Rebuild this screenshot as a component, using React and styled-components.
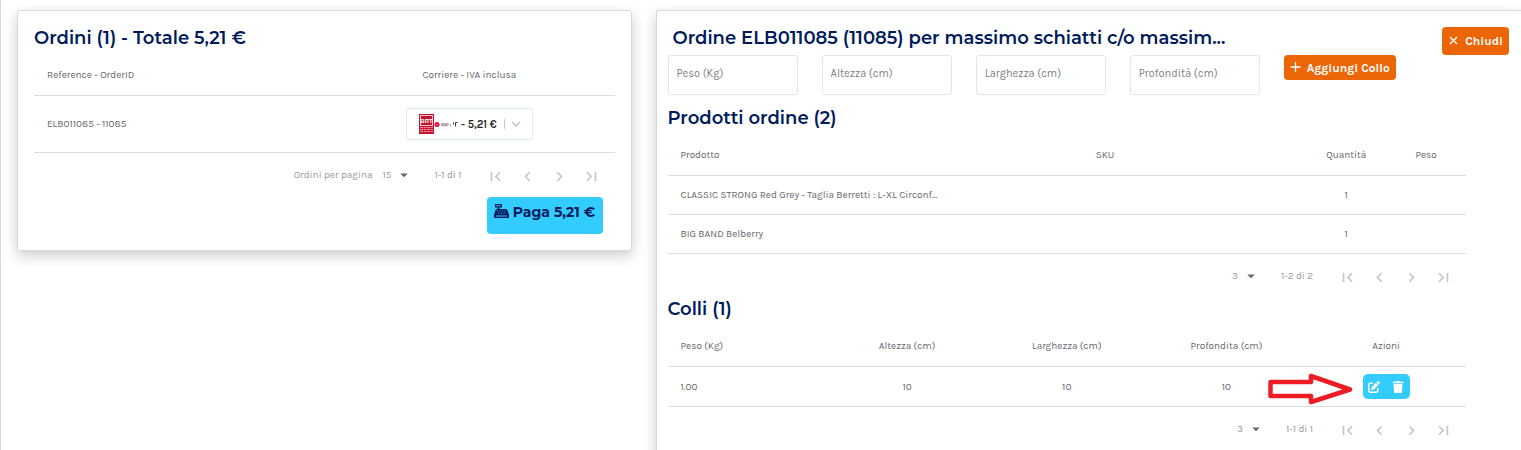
import React from "react";
import styled, { createGlobalStyle } from "styled-components";
import { FaTrash } from "react-icons/fa";
import { FaPenToSquare } from "react-icons/fa6";
import { MdFirstPage, MdLastPage, MdChevronLeft, MdChevronRight, MdArrowDropDown } from "react-icons/md";

const GlobalStyle = createGlobalStyle`
  * { box-sizing: border-box; }
  body {
    margin: 0;
    background: #fff;
    color: #67686c;
    font-family: Karla, Inter, sans-serif;
    font-size: 10px;
    overflow: hidden;
  }
  button, input, select { font-family: inherit; }
`;

const Page = styled.main`
  display: grid;
  grid-template-columns: minmax(0, 71fr) minmax(0, 100fr);
  gap: 24px;
  align-items: start;
  min-height: 100vh;
  padding: 10px 0 0 16px;
  border-left: 1px solid #d9d9d9;
`;

const Card = styled.section`
  background: #fff;
  border: 1px solid #d8d8d8;
  border-radius: 3px;
  box-shadow: 0 5px 14px rgba(0, 0, 0, 0.2);
`;

const OrdersCard = styled(Card)`
  padding: 16px;
`;

const DetailCard = styled(Card)`
  border-right: 0;
  border-radius: 3px 0 0 0;
  padding: 16px 12px 16px 11px;
  min-height: 460px;
`;

const Title = styled.h2`
  margin: 0;
  padding-left: ${(p) => (p.$indent ? 5 : 0)}px;
  color: #001b5c;
  font-family: Montserrat, Inter, sans-serif;
  font-size: 18px;
  font-weight: 600;
  line-height: 22px;
  white-space: nowrap;
  overflow: hidden;
  text-overflow: ellipsis;
`;

const DetailHeader = styled.header`
  display: flex;
  justify-content: space-between;
  align-items: flex-start;
`;

const DetailBody = styled.div`
  padding-right: 43px;
`;

const OrangeButton = styled.button`
  display: inline-flex;
  align-items: center;
  justify-content: center;
  gap: 6px;
  height: ${(p) => (p.$tall ? 28 : 25)}px;
  padding: 0 6px;
  border: 0;
  border-radius: 4px;
  background: #ec6608;
  color: #fff;
  font-size: 12px;
  font-weight: 700;
  white-space: nowrap;
`;

const ParcelForm = styled.form`
  display: grid;
  grid-template-columns: repeat(4, minmax(0, 5fr)) minmax(0, 7fr);
  gap: 24px;
  align-items: start;
  margin-bottom: 12px;
`;

const Field = styled.input`
  width: 100%;
  height: 40px;
  padding: 0 8px 4px;
  border: 1px solid #dbe8f4;
  border-radius: 3px;
  color: #67686c;
  font-size: 11px;
  outline: 0;
  &::placeholder { color: #7c7f84; opacity: 1; }
`;

const Table = styled.table`
  width: 100%;
  margin-top: 6px;
  border-collapse: separate;
  border-spacing: 0;
  table-layout: fixed;
`;

const HeadCell = styled.th`
  width: ${(p) => p.$width};
  height: 41px;
  padding: 0 13px;
  border-bottom: 1px solid #dcdcdc;
  font-size: 10px;
  font-weight: 400;
  text-align: ${(p) => p.$align || "left"};
`;

const Cell = styled.td`
  position: relative;
  height: ${(p) => p.$height}px;
  padding: 0 13px;
  border-bottom: 1px solid #dcdcdc;
  font-size: 10px;
  text-align: ${(p) => p.$align || "left"};
`;

const CourierPicker = styled.label`
  display: inline-flex;
  align-items: center;
  width: 127px;
  height: 32px;
  padding: 0 9px 0 12px;
  border: 1px solid #dbe8f4;
  border-radius: 3px;
  vertical-align: middle;
`;

const CourierSelect = styled.select`
  flex: 1;
  min-width: 0;
  padding: 0;
  border: 0;
  appearance: none;
  background: transparent;
  color: #222;
  font-size: 11px;
  font-weight: 600;
`;

const Pager = styled.nav`
  display: flex;
  align-items: center;
  justify-content: flex-end;
  height: 44px;
  padding-right: 7px;
  color: #9a9a9a;
  font-size: 10px;
`;

const PageSize = styled.label`
  position: relative;
  display: flex;
  align-items: center;
  gap: 10px;
  margin-right: 21px;
  svg { position: absolute; right: 0; color: #666; pointer-events: none; }
`;

const SizeSelect = styled.select`
  field-sizing: content;
  padding: 0 22px 0 0;
  border: 0;
  appearance: none;
  background: transparent;
  color: #9a9a9a;
  font-size: 10px;
`;

const PageRange = styled.span`
  margin-right: 18px;
`;

const PageButton = styled.button`
  display: flex;
  align-items: center;
  justify-content: center;
  width: 32px;
  height: 32px;
  padding: 2px 0 0;
  border: 0;
  background: transparent;
  color: #c4c4c4;
`;

const PayRow = styled.div`
  display: flex;
  justify-content: flex-end;
  padding-right: 12px;
`;

const PayButton = styled.button`
  display: flex;
  align-items: flex-start;
  justify-content: center;
  gap: 4px;
  width: 116px;
  height: 37px;
  padding: 7px 0 0;
  border: 0;
  border-radius: 4px;
  background: #33ccff;
  color: #001b5c;
  font-family: Montserrat, Inter, sans-serif;
  font-size: 14px;
  font-weight: 700;
  line-height: 16px;
  white-space: nowrap;
`;

const Actions = styled.div`
  display: inline-flex;
  width: 47px;
  height: 25px;
  border-radius: 5px;
  background: #33ccff;
  vertical-align: middle;
`;

const ActionButton = styled.button`
  display: flex;
  flex: 1;
  align-items: center;
  justify-content: center;
  padding: 0;
  border: 0;
  background: transparent;
  color: #fff;
`;

const Pointer = styled.svg`
  position: absolute;
  top: 6px;
  left: -38px;
  pointer-events: none;
`;

function CourierLogo() {
  return (
    <svg width="42" height="20" viewBox="0 0 42 20" aria-hidden="true">
      <rect width="15" height="20" fill="#c4122f" />
      <rect x="1.5" y="1.5" width="12" height="10" fill="none" stroke="#f3c7cf" />
      <text x="7.5" y="9.3" fill="#fff" fontSize="6" fontWeight="800" fontFamily="Liberation Sans" textAnchor="middle">BRT</text>
      <path d="M1 13.5h13M1 15.5h13M1 17.5h13" stroke="#f08a9b" strokeDasharray="3 .6" />
      <circle cx="18" cy="10.500" r="2.500" fill="#dc0032" />
      <path d="M16.600 9.500l1.400 1 1.400-1M18 10.500v1.500" fill="none" stroke="#fff" strokeWidth=".4" />
      <text x="22" y="12" fill="#222" fontSize="4" fontFamily="Inter">dpd</text>
      <path d="M31 11h1M34.500 8.500v2M36.500 12.500v-4h2" fill="none" stroke="#333" />
    </svg>
  );
}

function RegisterIcon() {
  return (
    <svg width="15" height="14" viewBox="0 0 15 14" fill="currentColor" aria-hidden="true">
      <path fillRule="evenodd" d="M1 0h7v3.500H5.500V5H12l1.500 1 1.500 5v2.300q0 .7-.7.7H.7Q0 14 0 13.300V11l1.500-5L3 5h.5V3.500H1ZM2.200 1.200v1h4.600v-1ZM3 6.500v1h1v-1Zm2.500 0v1h1v-1Zm2.500 0v1h1v-1Zm2.500 0v1h1v-1ZM4.200 8.700v1h1v-1Zm2.700 0v1h1v-1Zm2.700 0v1h1v-1ZM2 11.500v1h11v-1Z" />
    </svg>
  );
}

function Pagination({ label, size, range }) {
  return (
    <Pager aria-label="Paginazione">
      <PageSize>
        {label && <span>{label}</span>}
        <SizeSelect defaultValue={size} aria-label={label || "Righe per pagina"}>
          <option>{size}</option>
        </SizeSelect>
        <MdArrowDropDown size={18} />
      </PageSize>
      <PageRange>{range}</PageRange>
      <PageButton aria-label="Prima pagina"><MdFirstPage size={19} /></PageButton>
      <PageButton aria-label="Pagina precedente"><MdChevronLeft size={19} /></PageButton>
      <PageButton aria-label="Pagina successiva"><MdChevronRight size={19} /></PageButton>
      <PageButton aria-label="Ultima pagina"><MdLastPage size={19} /></PageButton>
    </Pager>
  );
}

const fields = ["Peso (Kg)", "Altezza (cm)", "Larghezza (cm)", "Profondità (cm)"];
const products = [
  { name: "CLASSIC STRONG Red Grey - Taglia Berretti : L-XL Circonf...", quantity: 1 },
  { name: "BIG BAND Belberry", quantity: 1 },
];

export default function App() {
  return (
    <>
      <GlobalStyle />
      <Page>
        <OrdersCard>
          <Title>Ordini (1) - Totale 5,21 €</Title>
          <Table>
            <thead>
              <tr>
                <HeadCell $width="50%">Reference - OrderID</HeadCell>
                <HeadCell $width="50%" $align="center">Corriere - IVA inclusa</HeadCell>
              </tr>
            </thead>
            <tbody>
              <tr>
                <Cell $height={57}>ELB011085 - 11085</Cell>
                <Cell $height={57} $align="center">
                  <CourierPicker>
                    <CourierLogo />
                    <CourierSelect aria-label="Corriere">
                      <option>- 5,21 €</option>
                    </CourierSelect>
                    <svg width="20" height="12" viewBox="0 0 20 12" fill="none" stroke="#c8c8c8" aria-hidden="true">
                      <path d="M1.500 1v10" />
                      <path d="M9 4l4 4 4-4" strokeWidth="1.600" />
                    </svg>
                  </CourierPicker>
                </Cell>
              </tr>
            </tbody>
          </Table>
          <Pagination label="Ordini per pagina" size="15" range="1-1 di 1" />
          <PayRow>
            <PayButton><RegisterIcon />Paga 5,21 €</PayButton>
          </PayRow>
        </OrdersCard>

        <DetailCard>
          <DetailHeader>
            <Title $indent>Ordine ELB011085 (11085) per massimo schiatti c/o massim...</Title>
            <OrangeButton $tall>
              <svg width="11" height="10" viewBox="0 0 11 10" stroke="#fff" strokeWidth="1.300" aria-hidden="true">
                <path d="M2 1l7 7M9 1L2 8" />
              </svg>
              Chiudi
            </OrangeButton>
          </DetailHeader>
          <DetailBody>
            <ParcelForm onSubmit={(e) => e.preventDefault()}>
              {fields.map((name) => (
                <Field key={name} placeholder={name} aria-label={name} />
              ))}
              <div>
                <OrangeButton type="submit">
                  <svg width="11" height="11" viewBox="0 0 11 11" stroke="#fff" strokeWidth="1.300" aria-hidden="true">
                    <path d="M5.500 0v10M.5 5h10" />
                  </svg>
                  Aggiungi Collo
                </OrangeButton>
              </div>
            </ParcelForm>

            <Title>Prodotti ordine (2)</Title>
            <Table>
              <thead>
                <tr>
                  <HeadCell $width="52%">Prodotto</HeadCell>
                  <HeadCell $width="28%">SKU</HeadCell>
                  <HeadCell $width="10%" $align="center">Quantità</HeadCell>
                  <HeadCell $width="10%" $align="center">Peso</HeadCell>
                </tr>
              </thead>
              <tbody>
                {products.map((p) => (
                  <tr key={p.name}>
                    <Cell $height={39}>{p.name}</Cell>
                    <Cell $height={39} />
                    <Cell $height={39} $align="center">{p.quantity}</Cell>
                    <Cell $height={39} />
                  </tr>
                ))}
              </tbody>
            </Table>
            <Pagination size="3" range="1-2 di 2" />

            <Title>Colli (1)</Title>
            <Table>
              <thead>
                <tr>
                  <HeadCell $width="20%">Peso (Kg)</HeadCell>
                  <HeadCell $width="20%" $align="center">Altezza (cm)</HeadCell>
                  <HeadCell $width="20%" $align="center">Larghezza (cm)</HeadCell>
                  <HeadCell $width="20%" $align="center">Profondita (cm)</HeadCell>
                  <HeadCell $width="20%" $align="center">Azioni</HeadCell>
                </tr>
              </thead>
              <tbody>
                <tr>
                  <Cell $height={40}>1.00</Cell>
                  <Cell $height={40} $align="center">10</Cell>
                  <Cell $height={40} $align="center">10</Cell>
                  <Cell $height={40} $align="center">10</Cell>
                  <Cell $height={40} $align="center">
                    <Actions>
                      <ActionButton aria-label="Modifica"><FaPenToSquare size={12} /></ActionButton>
                      <ActionButton aria-label="Elimina"><FaTrash size={12} /></ActionButton>
                    </Actions>
                    <Pointer width="86" height="32" viewBox="0 0 86 32" fill="#fff" stroke="#ed1c24" strokeWidth="4.500" strokeLinejoin="round" aria-hidden="true">
                      <path d="M2.500 9H43V3L82 16.500 43 29V23H2.500Z" />
                    </Pointer>
                  </Cell>
                </tr>
              </tbody>
            </Table>
            <Pagination size="3" range="1-1 di 1" />
          </DetailBody>
        </DetailCard>
      </Page>
    </>
  );
}
